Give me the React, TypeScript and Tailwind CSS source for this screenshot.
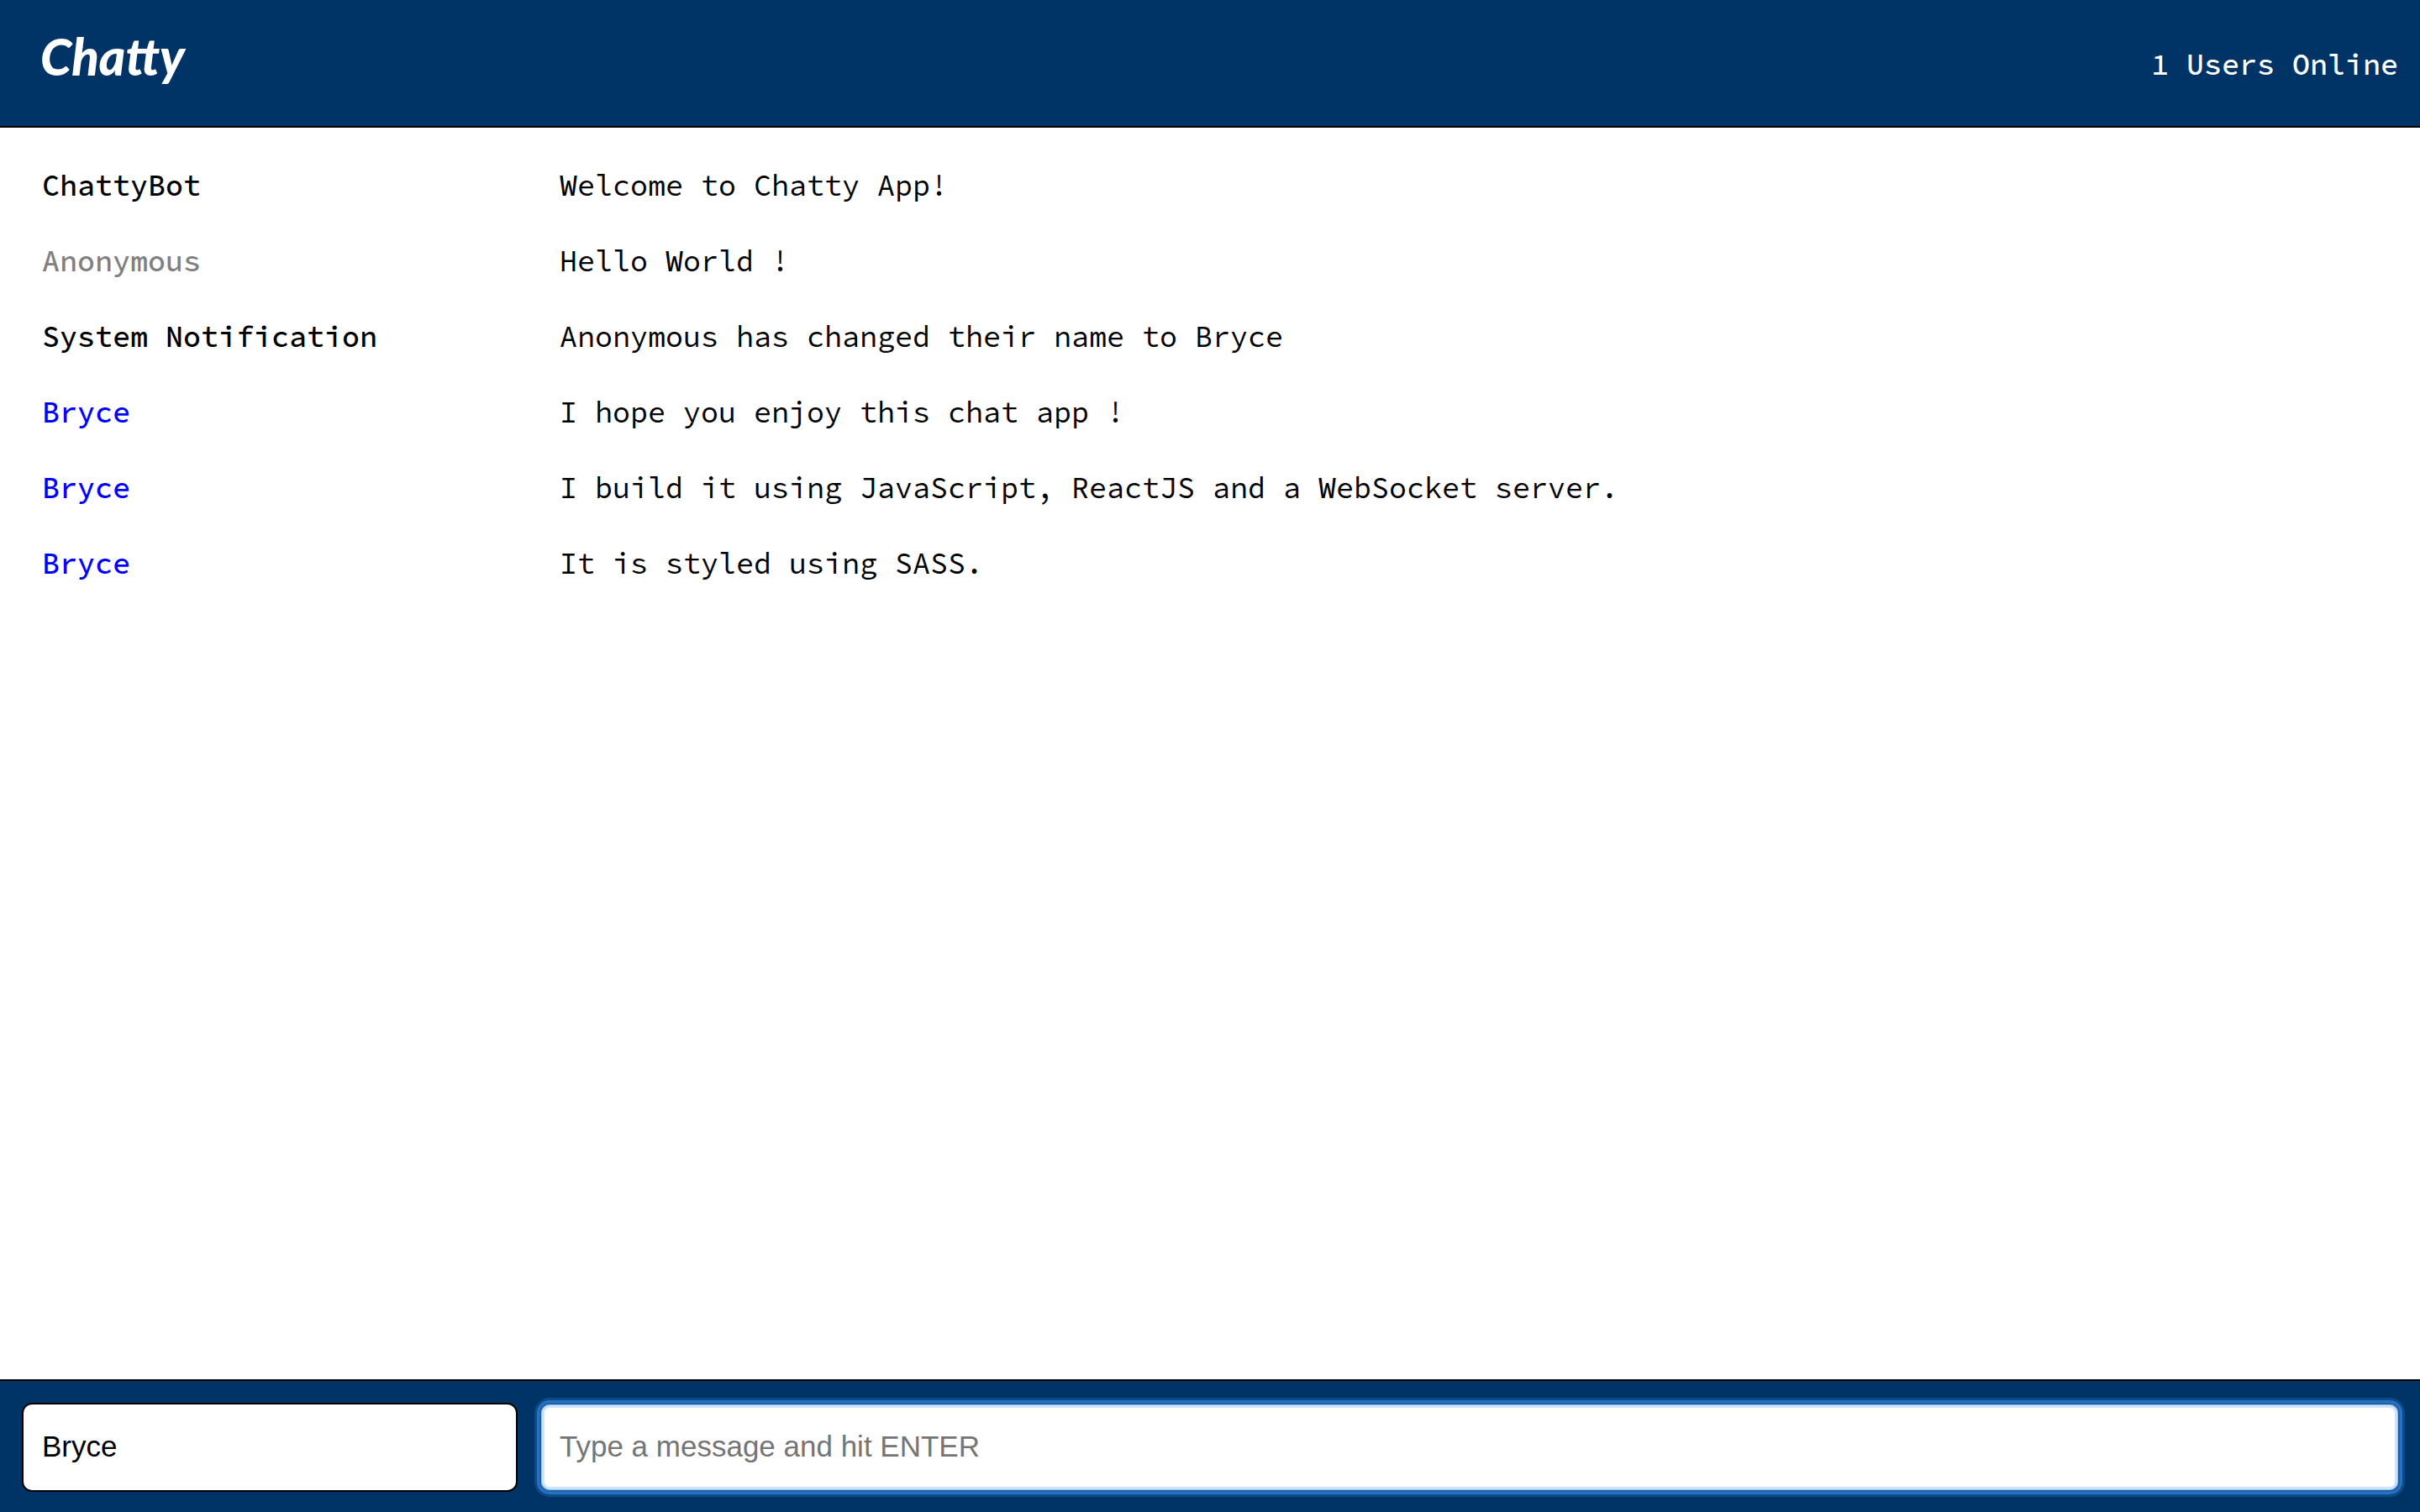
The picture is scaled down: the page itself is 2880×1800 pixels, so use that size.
type Message = { id: number; user: string; color: string; text: string };

const messages: Message[] = [
  { id: 1, user: "ChattyBot", color: "text-black", text: "Welcome to Chatty App!" },
  { id: 2, user: "Anonymous", color: "text-[#808080]", text: "Hello World !" },
  { id: 3, user: "System Notification", color: "text-black", text: "Anonymous has changed their name to Bryce" },
  { id: 4, user: "Bryce", color: "text-[#0000ff]", text: "I hope you enjoy this chat app !" },
  { id: 5, user: "Bryce", color: "text-[#0000ff]", text: "I build it using JavaScript, ReactJS and a WebSocket server." },
  { id: 6, user: "Bryce", color: "text-[#0000ff]", text: "It is styled using SASS." },
];

export default function App() {
  return (
    <div className="flex min-h-screen flex-col bg-white font-['Source_Code_Pro','Liberation_Mono',monospace] text-[35px] leading-[50px] text-black">
      <header className="flex h-[152px] items-center justify-between border-b-2 border-black bg-[#003366] pt-1 pr-[26px] pl-12 text-white">
        <a href="#" className="pb-5 font-['Lato',sans-serif] text-[60px] leading-[80px] font-black italic">
          Chatty
        </a>
        <span className="font-medium">1 Users Online</span>
      </header>
      <main className="flex grow flex-col gap-10 py-11 pr-6 pl-[50px]">
        {messages.map((m) => (
          <div key={m.id} className="flex">
            <span className={`w-[616px] shrink-0 font-medium ${m.color}`}>{m.user}</span>
            <span className="grow">{m.text}</span>
          </div>
        ))}
      </main>
      <footer className="flex gap-[26px] border-t-2 border-black bg-[#003366] pt-[26px] pr-6 pb-6 pl-[26px] font-['Liberation_Sans',sans-serif]">
        <input
          type="text"
          aria-label="Your name"
          defaultValue="Bryce"
          className="h-[106px] w-[590px] rounded-[12px] border-2 border-black bg-white px-[22px] pb-0.5 outline-none"
        />
        <input
          type="text"
          aria-label="Message"
          placeholder="Type a message and hit ENTER"
          className="h-[106px] min-w-0 grow rounded-[12px] border-2 border-[#24609f] bg-white px-[22px] pb-0.5 shadow-[0_0_0_3px_#2472c4,0_0_0_6px_#0e4a86,inset_0_0_0_1px_#8fc2f3,inset_0_0_0_4px_#cce4fe] outline-none placeholder:text-[#757575]"
        />
      </footer>
    </div>
  );
}
